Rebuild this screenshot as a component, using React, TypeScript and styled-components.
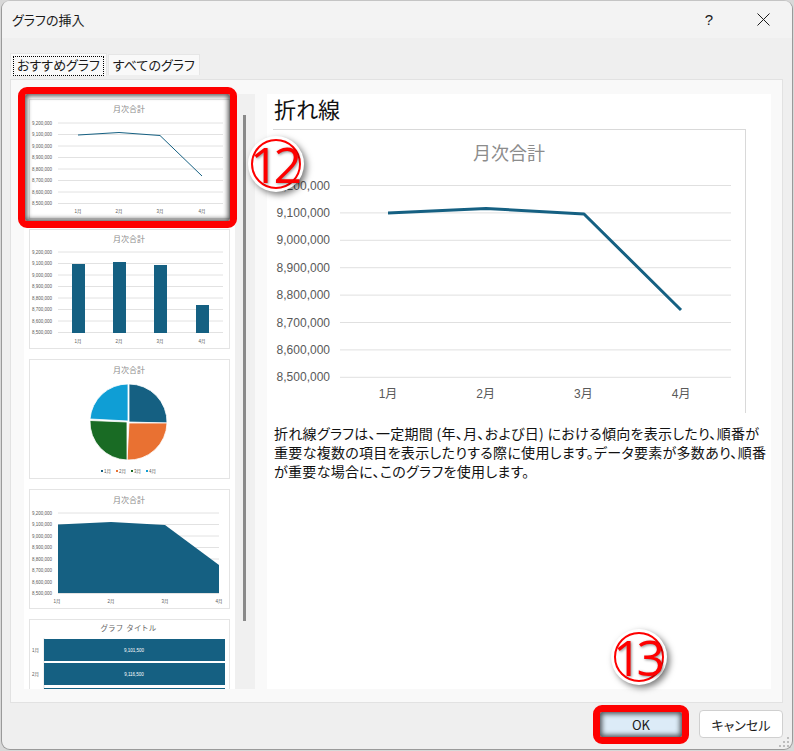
import styled, { createGlobalStyle } from "styled-components";

const BLUE = "#156082";
const ORANGE = "#E97132";
const GREEN = "#196B24";
const SKY = "#0F9ED5";

const GlobalStyle = createGlobalStyle`
  html, body {
    margin: 0;
    padding: 0;
    background: #d8d8d8;
  }
  body {
    font-family: "Noto Sans CJK JP", "Liberation Sans", sans-serif;
    font-feature-settings: "palt";
    color: #1a1a1a;
  }
`;

const Stage = styled.div`
  position: relative;
  width: 794px;
  height: 751px;
  overflow: hidden;
`;

const Dialog = styled.div`
  box-sizing: border-box;
  display: flex;
  flex-direction: column;
  width: 792px;
  height: 750px;
  margin-left: 1px;
  background: #efefef;
  border: 1px solid #9a9a9a;
  border-top-color: #c4c4c4;
  border-radius: 9px;
  overflow: hidden;
`;

const TitleBar = styled.div`
  display: flex;
  align-items: center;
  flex: 0 0 37px;
  padding-left: 10px;
  background: #f3f3f3;
  font-size: 13px;
`;

const Title = styled.div`
  flex: 1;
  margin-top: -1px;
`;

const HelpButton = styled.div`
  width: 20px;
  margin-right: 38px;
  font-family: "Liberation Sans", sans-serif;
  font-size: 15px;
  text-align: center;
`;

const CloseButton = styled.div`
  display: flex;
  width: 13px;
  margin-right: 22px;
`;

const Main = styled.div`
  flex: 1;
  padding: 15px 9px 0 8px;
`;

const Tabs = styled.div`
  display: flex;
  align-items: flex-end;
  height: 26px;
  gap: 1px;
`;

const Tab = styled.div<{ $active?: boolean }>`
  box-sizing: border-box;
  height: ${(p) => (p.$active ? "23px" : "21px")};
  margin-bottom: ${(p) => (p.$active ? "3px" : "4px")};
  padding: ${(p) => (p.$active ? "2px" : "0 4px")};
  background: #f9f9f9;
  border: 1px solid #e6e6e6;
  border-bottom: none;
  font-size: 13px;
  line-height: 20px;
`;

const FocusRect = styled.div`
  height: 18px;
  padding: 0 3px;
  border: 1px dotted #000;
  line-height: 16px;
`;

const Panel = styled.div`
  display: flex;
  height: 624px;
  box-sizing: border-box;
  padding: 14px 11px 13px 13px;
  background: #f9f9f9;
  border: 1px solid #e2e2e2;
`;

const ThumbList = styled.div`
  box-sizing: border-box;
  display: flex;
  flex-direction: column;
  flex: 0 0 211px;
  gap: 10px;
  padding: 5px;
  background: #fff;
  overflow: hidden;
`;

const Thumb = styled.div`
  flex: 0 0 120px;
  box-sizing: border-box;
  background: #fff;
  border: 1px solid #e4e4e4;

  svg {
    display: block;
  }
`;

const ScrollTrack = styled.div`
  flex: 0 0 20px;
  box-sizing: border-box;
  padding: 21px 0 0 8px;
  background: #f0f0f0;
`;

const ScrollThumb = styled.div`
  width: 3px;
  height: 506px;
  background: #8a8a8a;
`;

const Detail = styled.div`
  flex: 0 0 504px;
  box-sizing: border-box;
  margin-left: 12px;
  padding-left: 6px;
  background: #fff;
`;

const Heading = styled.div`
  height: 35px;
  padding-left: 1px;
  font-size: 22px;
  line-height: 29px;
  color: #111;
`;

const ChartFrame = styled.div`
  box-sizing: border-box;
  width: 473px;
  height: 284px;
  border-top: 1px solid #d9d9d9;
  border-right: 1px solid #d9d9d9;

  svg {
    display: block;
  }
`;

const Description = styled.p`
  width: 494px;
  margin: 11px 0 0 1px;
  font-size: 14px;
  line-height: 19px;
  letter-spacing: 0.3px;
  color: #111;
`;

const Footer = styled.div`
  display: flex;
  justify-content: flex-end;
  flex: 0 0 46px;
  gap: 16px;
  box-sizing: border-box;
  padding: 7px 9px 0 0;
`;

const Button = styled.button<{ $primary?: boolean }>`
  width: 84px;
  height: 28px;
  padding: 0;
  background: ${(p) => (p.$primary ? "#dcebf7" : "#fff")};
  border: 1px solid ${(p) => (p.$primary ? "#c4d8e8" : "#d0d0d0")};
  border-radius: 4px;
  font-family: inherit;
  font-feature-settings: "palt";
  font-size: 13px;
  color: #1a1a1a;
`;

const Grip = styled.svg`
  position: absolute;
  left: 779px;
  top: 737px;
`;

const RedBox = styled.div<{ $x: number; $y: number; $w: number; $h: number }>`
  position: absolute;
  left: ${(p) => p.$x}px;
  top: ${(p) => p.$y}px;
  width: ${(p) => p.$w}px;
  height: ${(p) => p.$h}px;
  box-sizing: border-box;
  border: 7px solid #fe0000;
  border-radius: 9px;
  box-shadow: inset 0 0 5px 2px rgba(0, 0, 0, 0.65);
`;

const Badge = styled.div<{ $x: number; $y: number }>`
  position: absolute;
  left: ${(p) => p.$x - 28}px;
  top: ${(p) => p.$y - 28}px;
  box-sizing: border-box;
  display: flex;
  align-items: center;
  justify-content: center;
  width: 56px;
  height: 56px;
  background: #fff;
  border-radius: 50%;
  box-shadow: 3px 3px 6px rgba(0, 0, 0, 0.5);
`;

const BadgeRing = styled.div`
  box-sizing: border-box;
  display: flex;
  align-items: center;
  justify-content: center;
  width: 50px;
  height: 50px;
  border: 2px solid #fe0000;
  border-radius: 50%;
  color: #fe0000;
  font-family: "Open Sans", "Liberation Sans", sans-serif;
  font-size: 50px;
  font-weight: 400;
  line-height: 46px;
  letter-spacing: -5px;
  text-indent: -5px;
  text-shadow: 1px 1px 3px rgba(0, 0, 0, 0.45);
`;

const AxisText = styled.text<{ $size: number; $fill?: string }>`
  font-family: "Liberation Sans", "Noto Sans CJK JP", sans-serif;
  font-size: ${(p) => p.$size}px;
  fill: ${(p) => p.$fill ?? "#595959"};
`;

const ChartTitle = styled.text<{ $size: number; $spaced?: boolean }>`
  font-family: "Noto Sans CJK JP", sans-serif;
  font-size: ${(p) => p.$size}px;
  letter-spacing: ${(p) => (p.$spaced ? "1.2px" : "0")};
  fill: ${(p) => (p.$spaced ? "#666" : "#8c8c8c")};
  text-anchor: middle;
`;

const VALUES = ["9,200,000", "9,100,000", "9,000,000", "8,900,000", "8,800,000", "8,700,000", "8,600,000", "8,500,000"];
const MONTHS = ["1月", "2月", "3月", "4月"];

const ThumbAxes = ({ top, right = 194, xs, xLabelY }: { top: number; right?: number; xs: number[]; xLabelY: number }) => (
  <>
    {VALUES.map((v, i) => {
      const y = top + i * 11.5;
      return (
        <g key={v}>
          <line x1={29} x2={right} y1={y} y2={y} stroke="#e2e2e2" strokeWidth={1} />
          <AxisText $size={4.5} x={3} y={y + 1.6}>
            {v}
          </AxisText>
        </g>
      );
    })}
    {MONTHS.map((m, i) => (
      <AxisText key={m} $size={4.5} x={xs[i]} y={xLabelY} textAnchor="middle">
        {m}
      </AxisText>
    ))}
  </>
);

const ThumbSvg = ({ children }: { children: React.ReactNode }) => (
  <svg width={198} height={118} viewBox="1 0 198 118">
    {children}
  </svg>
);

const LineThumb = () => (
  <Thumb>
    <ThumbSvg>
      <ChartTitle $size={8} x={100} y={12}>月次合計</ChartTitle>
      <ThumbAxes top={23} xs={[49, 90, 131, 173]} xLabelY={113} />
      <polyline points="49,35 90,32.5 131,35.5 173,76" fill="none" stroke={BLUE} strokeWidth={1} />
    </ThumbSvg>
  </Thumb>
);

const BarThumb = () => (
  <Thumb>
    <ThumbSvg>
      <ChartTitle $size={8} x={100} y={12}>月次合計</ChartTitle>
      <ThumbAxes top={22} xs={[49, 90, 131, 173]} xLabelY={113} />
      {[
        [43, 34],
        [84, 32],
        [125, 35],
        [167, 75],
      ].map(([x, y]) => (
        <rect key={x} x={x} y={y} width={13} height={103 - y} fill={BLUE} />
      ))}
    </ThumbSvg>
  </Thumb>
);

const PIE_LEGEND = [BLUE, ORANGE, GREEN, SKY];

const PieThumb = () => (
  <Thumb>
    <ThumbSvg>
      <ChartTitle $size={8} x={100} y={13}>月次合計</ChartTitle>
      <g stroke="#fff" strokeWidth={0.8}>
        <path d="M100 62 L100 24 A38 38 0 0 1 138 63 Z" fill={BLUE} />
        <path d="M100 63 L138 63 A38 38 0 0 1 98 100 Z" fill={ORANGE} />
        <path d="M98 62 L98 100 A38 38 0 0 1 61 60.5 Z" fill={GREEN} />
        <path d="M99 61 L61 59 A38 38 0 0 1 99 24 Z" fill={SKY} />
      </g>
      {MONTHS.map((m, i) => (
        <g key={m}>
          <rect x={72 + i * 15} y={110} width={2} height={2} fill={PIE_LEGEND[i]} />
          <AxisText $size={4.5} x={75 + i * 15} y={112.6}>
            {m}
          </AxisText>
        </g>
      ))}
    </ThumbSvg>
  </Thumb>
);

const AreaThumb = () => (
  <Thumb>
    <ThumbSvg>
      <ChartTitle $size={8} x={100} y={13}>月次合計</ChartTitle>
      <ThumbAxes top={23} right={190} xs={[28, 82, 136, 190]} xLabelY={113} />
      <polygon points="29,34.5 82,32 136,35 190,75 190,103 29,103" fill={BLUE} />
    </ThumbSvg>
  </Thumb>
);

const HBarThumb = () => (
  <Thumb>
    <ThumbSvg>
      <ChartTitle $size={7.5} $spaced x={100} y={11}>グラフ タイトル</ChartTitle>
      <line x1={15} x2={15} y1={18} y2={118} stroke="#e2e2e2" />
      {[
        ["1月", "9,101,500", 19],
        ["2月", "9,116,500", 43],
      ].map(([m, v, y]) => (
        <g key={m as string}>
          <AxisText $size={4.5} x={3} y={(y as number) + 12.5}>
            {m}
          </AxisText>
          <rect x={15} y={y as number} width={181} height={22} fill={BLUE} />
          <AxisText $size={4.5} $fill="#fff" x={105} y={(y as number) + 12.5} textAnchor="middle">
            {v}
          </AxisText>
        </g>
      ))}
      <rect x={15} y={68} width={181} height={22} fill={BLUE} />
    </ThumbSvg>
  </Thumb>
);

// main preview, viewBox is in page pixels so the numbers read straight off the screenshot
const LinePreview = () => (
  <ChartFrame>
    <svg width={472} height={283} viewBox="273 130 472 283">
      <ChartTitle $size={18} x={509} y={160}>月次合計</ChartTitle>
      {VALUES.map((v, i) => {
        const y = 185.5 + i * 27.4;
        return (
          <g key={v}>
            <line x1={340} x2={731} y1={y} y2={y} stroke="#e0e0e0" strokeWidth={1} />
            <AxisText $size={12} x={330} y={y + 4} textAnchor="end">
              {v}
            </AxisText>
          </g>
        );
      })}
      {MONTHS.map((m, i) => (
        <AxisText key={m} $size={12} x={388 + i * 97.7} y={398} textAnchor="middle">
          {m}
        </AxisText>
      ))}
      <polyline points="388,213 486,208.5 584,214 681,310" fill="none" stroke={BLUE} strokeWidth={3} strokeLinejoin="round" />
    </svg>
  </ChartFrame>
);

const App = () => {
  return (
    <Stage>
      <GlobalStyle />
      <Dialog>
        <TitleBar>
          <Title>グラフの挿入</Title>
          <HelpButton>?</HelpButton>
          <CloseButton>
            <svg width={13} height={13} viewBox="0 0 13 13">
              <path d="M0.5 0.5 L12.5 12.5 M12.5 0.5 L0.5 12.5" stroke="#1a1a1a" strokeWidth={1} fill="none" />
            </svg>
          </CloseButton>
        </TitleBar>
        <Main>
          <Tabs>
            <Tab $active>
              <FocusRect>おすすめグラフ</FocusRect>
            </Tab>
            <Tab>すべてのグラフ</Tab>
          </Tabs>
          <Panel>
            <ThumbList>
              <LineThumb />
              <BarThumb />
              <PieThumb />
              <AreaThumb />
              <HBarThumb />
            </ThumbList>
            <ScrollTrack>
              <ScrollThumb />
            </ScrollTrack>
            <Detail>
              <Heading>折れ線</Heading>
              <LinePreview />
              <Description>
                折れ線グラフは、一定期間 (年、月、および日) における傾向を表示したり、順番が重要な複数の項目を表示したりする際に使用します。データ要素が多数あり、順番が重要な場合に、このグラフを使用します。
              </Description>
            </Detail>
          </Panel>
        </Main>
        <Footer>
          <Button $primary>OK</Button>
          <Button>キャンセル</Button>
        </Footer>
      </Dialog>
      <Grip width={12} height={12} viewBox="0 0 12 12">
        <g fill="#bdbdbd">
          <rect x={8} y={0} width={2} height={2} />
          <rect x={4} y={4} width={2} height={2} />
          <rect x={8} y={4} width={2} height={2} />
          <rect x={0} y={8} width={2} height={2} />
          <rect x={4} y={8} width={2} height={2} />
          <rect x={8} y={8} width={2} height={2} />
        </g>
      </Grip>
      <RedBox $x={18} $y={87} $w={219} $h={141} />
      <RedBox $x={593} $y={705} $w={96} $h={39} />
      <Badge $x={276} $y={164}>
        <BadgeRing>12</BadgeRing>
      </Badge>
      <Badge $x={639} $y={657}>
        <BadgeRing>13</BadgeRing>
      </Badge>
    </Stage>
  );
};

export default App;
